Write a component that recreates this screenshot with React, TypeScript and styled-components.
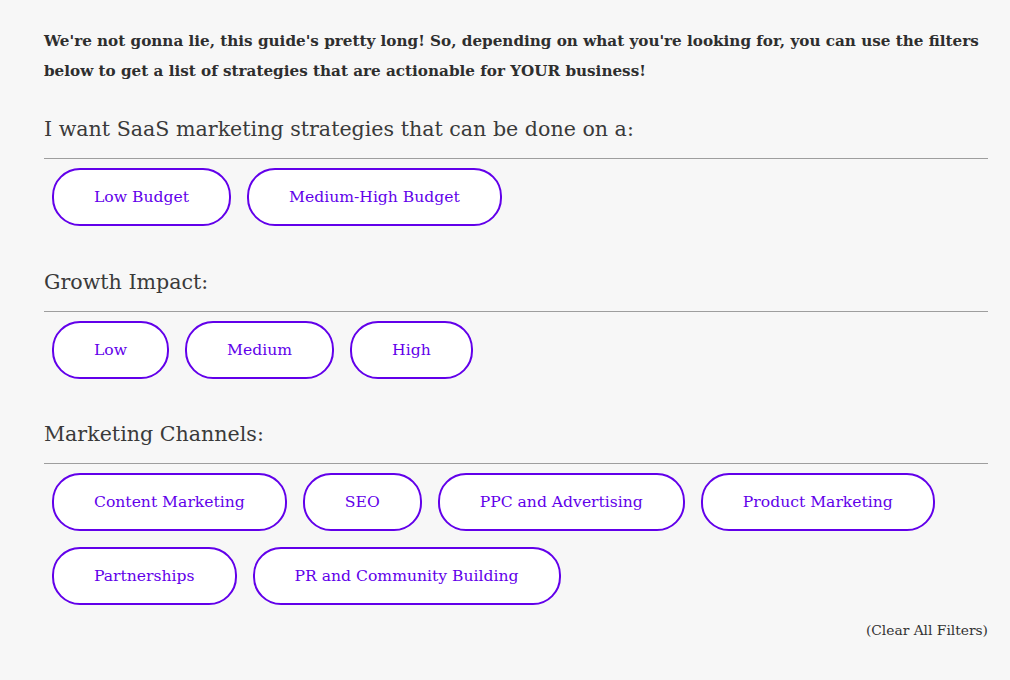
import React from "react";
import styled, { createGlobalStyle } from "styled-components";

const Global = createGlobalStyle`
  html, body { margin: 0; padding: 0; background: #f7f7f7; }
  body { font-family: "DejaVu Serif", "Liberation Serif", serif; color: #333; }
`;

const Page = styled.div`
  padding: 26px 22px 30px 44px;
  width: 944px;
  box-sizing: content-box;
`;

const Intro = styled.p`
  margin: 0 0 28px 0;
  font-size: 15.2px;
  font-weight: bold;
  line-height: 30px;
  color: #2e2e2e;
`;

const Section = styled.section`
  margin-bottom: 40.5px;
  &:last-of-type { margin-bottom: 15px; }
`;

const Heading = styled.h3`
  margin: 0;
  padding-bottom: 14px;
  font-size: 20.6px;
  font-weight: normal;
  line-height: 30px;
  color: #3a3a3a;
  border-bottom: 1px solid #9e9e9e;
`;

const Buttons = styled.div`
  display: flex;
  flex-wrap: wrap;
  gap: 16px;
  padding: 9px 8px 0 8px;
`;

const Filter = styled.button`
  height: 58px;
  padding: 0 40px;
  border: 2px solid #6200ea;
  border-radius: 28px;
  background: #fff;
  color: #6200ea;
  font-family: "DejaVu Serif", "Liberation Serif", serif;
  font-size: 15.6px;
  cursor: pointer;
`;

const Clear = styled.div`
  text-align: right;
  font-size: 13.8px;
  line-height: 20px;
  color: #333;
`;

const sections = [
  { title: "I want SaaS marketing strategies that can be done on a:", items: ["Low Budget", "Medium-High Budget"] },
  { title: "Growth Impact:", items: ["Low", "Medium", "High"] },
  {
    title: "Marketing Channels:",
    items: [
      "Content Marketing",
      "SEO",
      "PPC and Advertising",
      "Product Marketing",
      "Partnerships",
      "PR and Community Building",
    ],
  },
];

export default function App() {
  return (
    <Page>
      <Global />
      <Intro>
        We're not gonna lie, this guide's pretty long! So, depending on what you're looking for, you can use the filters
        below to get a list of strategies that are actionable for YOUR business!
      </Intro>
      {sections.map((s) => (
        <Section key={s.title}>
          <Heading>{s.title}</Heading>
          <Buttons>
            {s.items.map((i) => (
              <Filter key={i}>{i}</Filter>
            ))}
          </Buttons>
        </Section>
      ))}
      <Clear>(Clear All Filters)</Clear>
    </Page>
  );
}
